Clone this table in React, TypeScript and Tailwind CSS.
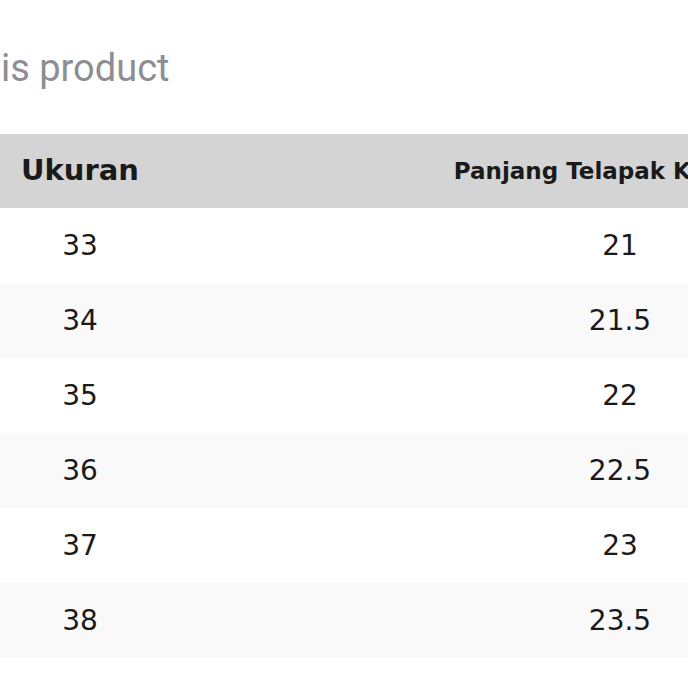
import React from "react";

const rows = [
  ["33", "21"],
  ["34", "21.5"],
  ["35", "22"],
  ["36", "22.5"],
  ["37", "23"],
  ["38", "23.5"],
];

export default function App() {
  return (
    <div className="w-[688px] h-[688px] overflow-hidden bg-white">
      <div className="h-[134px] pt-[46px] pl-[1px]">
        <div
          className="text-[38px] leading-[44px] text-[#8d8d92] whitespace-nowrap"
          style={{ fontFamily: "Roboto, 'Noto Sans', sans-serif" }}
        >
          is product
        </div>
      </div>
      <div
        className="w-[1080px] text-[#1a1a1a]"
        style={{ fontFamily: "'DejaVu Sans', 'Liberation Sans', sans-serif" }}
      >
        <div className="flex h-[74px] items-center bg-[#d4d4d4] font-bold">
          <div className="w-[160px] text-center text-[29px]">Ukuran</div>
          <div className="w-[920px] pl-[10px] text-center text-[23px] whitespace-nowrap">
            Panjang Telapak Kaki (cm)
          </div>
        </div>
        {rows.map((r, i) => (
          <div
            key={r[0]}
            className={
              "flex h-[75px] items-center text-[28px] " +
              (i % 2 === 1 ? "bg-[#f9f9f9]" : "bg-white")
            }
          >
            <div className="w-[160px] text-center">{r[0]}</div>
            <div className="w-[920px] text-center">{r[1]}</div>
          </div>
        ))}
      </div>
    </div>
  );
}
